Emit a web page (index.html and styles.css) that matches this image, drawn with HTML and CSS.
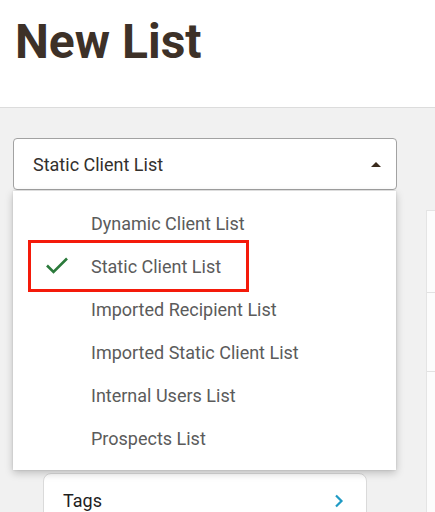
FILE: index.html
```html
<!DOCTYPE html>
<html lang="en">
<head>
<meta charset="utf-8">
<title>New List</title>
<link rel="stylesheet" href="styles.css">
</head>
<body>
<header class="page-header">
  <h1 class="title">New List</h1>
</header>
<main class="content">
  <section class="left-col">
    <div class="select">
      <span class="select-value">Static Client List</span>
      <svg class="select-arrow" width="10" height="5" viewBox="0 0 10 5"><path d="M0 5 L5 0 L10 5 Z" fill="#3a2a1c"/></svg>
    </div>
    <ul class="menu">
      <li class="menu-item">Dynamic Client List</li>
      <li class="menu-item selected">
        <svg class="check" width="24" height="18" viewBox="0 0 24 18"><polyline points="2,8.5 8.5,15 22,1.5" fill="none" stroke="#2b7a3b" stroke-width="2.6"/></svg>
        Static Client List
      </li>
      <li class="menu-item">Imported Recipient List</li>
      <li class="menu-item">Imported Static Client List</li>
      <li class="menu-item">Internal Users List</li>
      <li class="menu-item">Prospects List</li>
      <li class="highlight" aria-hidden="true"></li>
    </ul>
    <div class="tags-card">
      <span class="tags-label">Tags</span>
      <svg class="chevron" width="10" height="14" viewBox="0 0 10 14"><polyline points="2,1.5 7.5,7 2,12.5" fill="none" stroke="#1f9ac4" stroke-width="2.2"/></svg>
    </div>
  </section>
  <aside class="right-col">
    <div class="panel-row first"></div>
    <div class="panel-row"></div>
    <div class="panel-row last"></div>
  </aside>
</main>
</body>
</html>
```
FILE: styles.css
```css
* { box-sizing: border-box; }
html, body { margin: 0; padding: 0; }
body {
  font-family: Roboto, "Liberation Sans", Arial, sans-serif;
  background: #f1f1f1;
  width: 435px;
  height: 512px;
  overflow: hidden;
}
.page-header {
  background: #fff;
  height: 108px;
  border-bottom: 1px solid #dcdcdc;
  padding: 14px 15px 0;
}
.title {
  margin: 0;
  font-size: 48px;
  line-height: 56px;
  font-weight: 700;
  color: #3d3128;
}
.content {
  display: flex;
  gap: 29px;
  height: 404px;
  overflow: hidden;
  padding: 30px 0 0 13px;
}
.left-col {
  position: relative;
  width: 384px;
  flex: none;
}
.select {
  height: 52px;
  background: #fff;
  border: 1px solid #a2a2a2;
  border-radius: 4px;
  display: flex;
  align-items: center;
  justify-content: space-between;
  padding: 0 15px 0 19px;
}
.select-value {
  font-size: 18px;
  color: #33302d;
}
.menu {
  position: absolute;
  top: 53px;
  left: 0;
  width: 383px;
  margin: 0;
  padding: 11px 0 10px;
  list-style: none;
  background: #fff;
  box-shadow: 0 3px 8px rgba(0,0,0,0.22), 0 0 2px rgba(0,0,0,0.12);
  z-index: 5;
}
.menu-item {
  position: relative;
  height: 43px;
  display: flex;
  align-items: center;
  padding-left: 78px;
  font-size: 18px;
  color: #5b5b5b;
}
.check {
  position: absolute;
  left: 32px;
  top: 12px;
}
.highlight {
  position: absolute;
  left: 15px;
  top: 49px;
  width: 221px;
  height: 52px;
  border: 3px solid #f41a0a;
}
.tags-card {
  margin: 283px 0 0 30px;
  width: 324px;
  height: 60px;
  background: #fff;
  border: 1px solid #dadada;
  border-radius: 8px;
  display: flex;
  align-items: flex-start;
  justify-content: space-between;
  padding: 16px 22px 0 19px;
}
.tags-label {
  font-size: 18px;
  line-height: 22px;
  color: #1e1e1e;
}
.chevron {
  margin-top: 4px;
}
.right-col {
  flex: 1;
  margin-top: 72px;
  background: #fcfcfc;
  border-left: 1px solid #e4e4e4;
  border-top: 1px solid #e4e4e4;
  display: flex;
  flex-direction: column;
}
.panel-row {
  height: 79px;
  flex: none;
  border-bottom: 1px solid #e2e2e2;
}
.panel-row.first { height: 82px; }
.panel-row.last { flex: 1; border-bottom: 0; }
```
